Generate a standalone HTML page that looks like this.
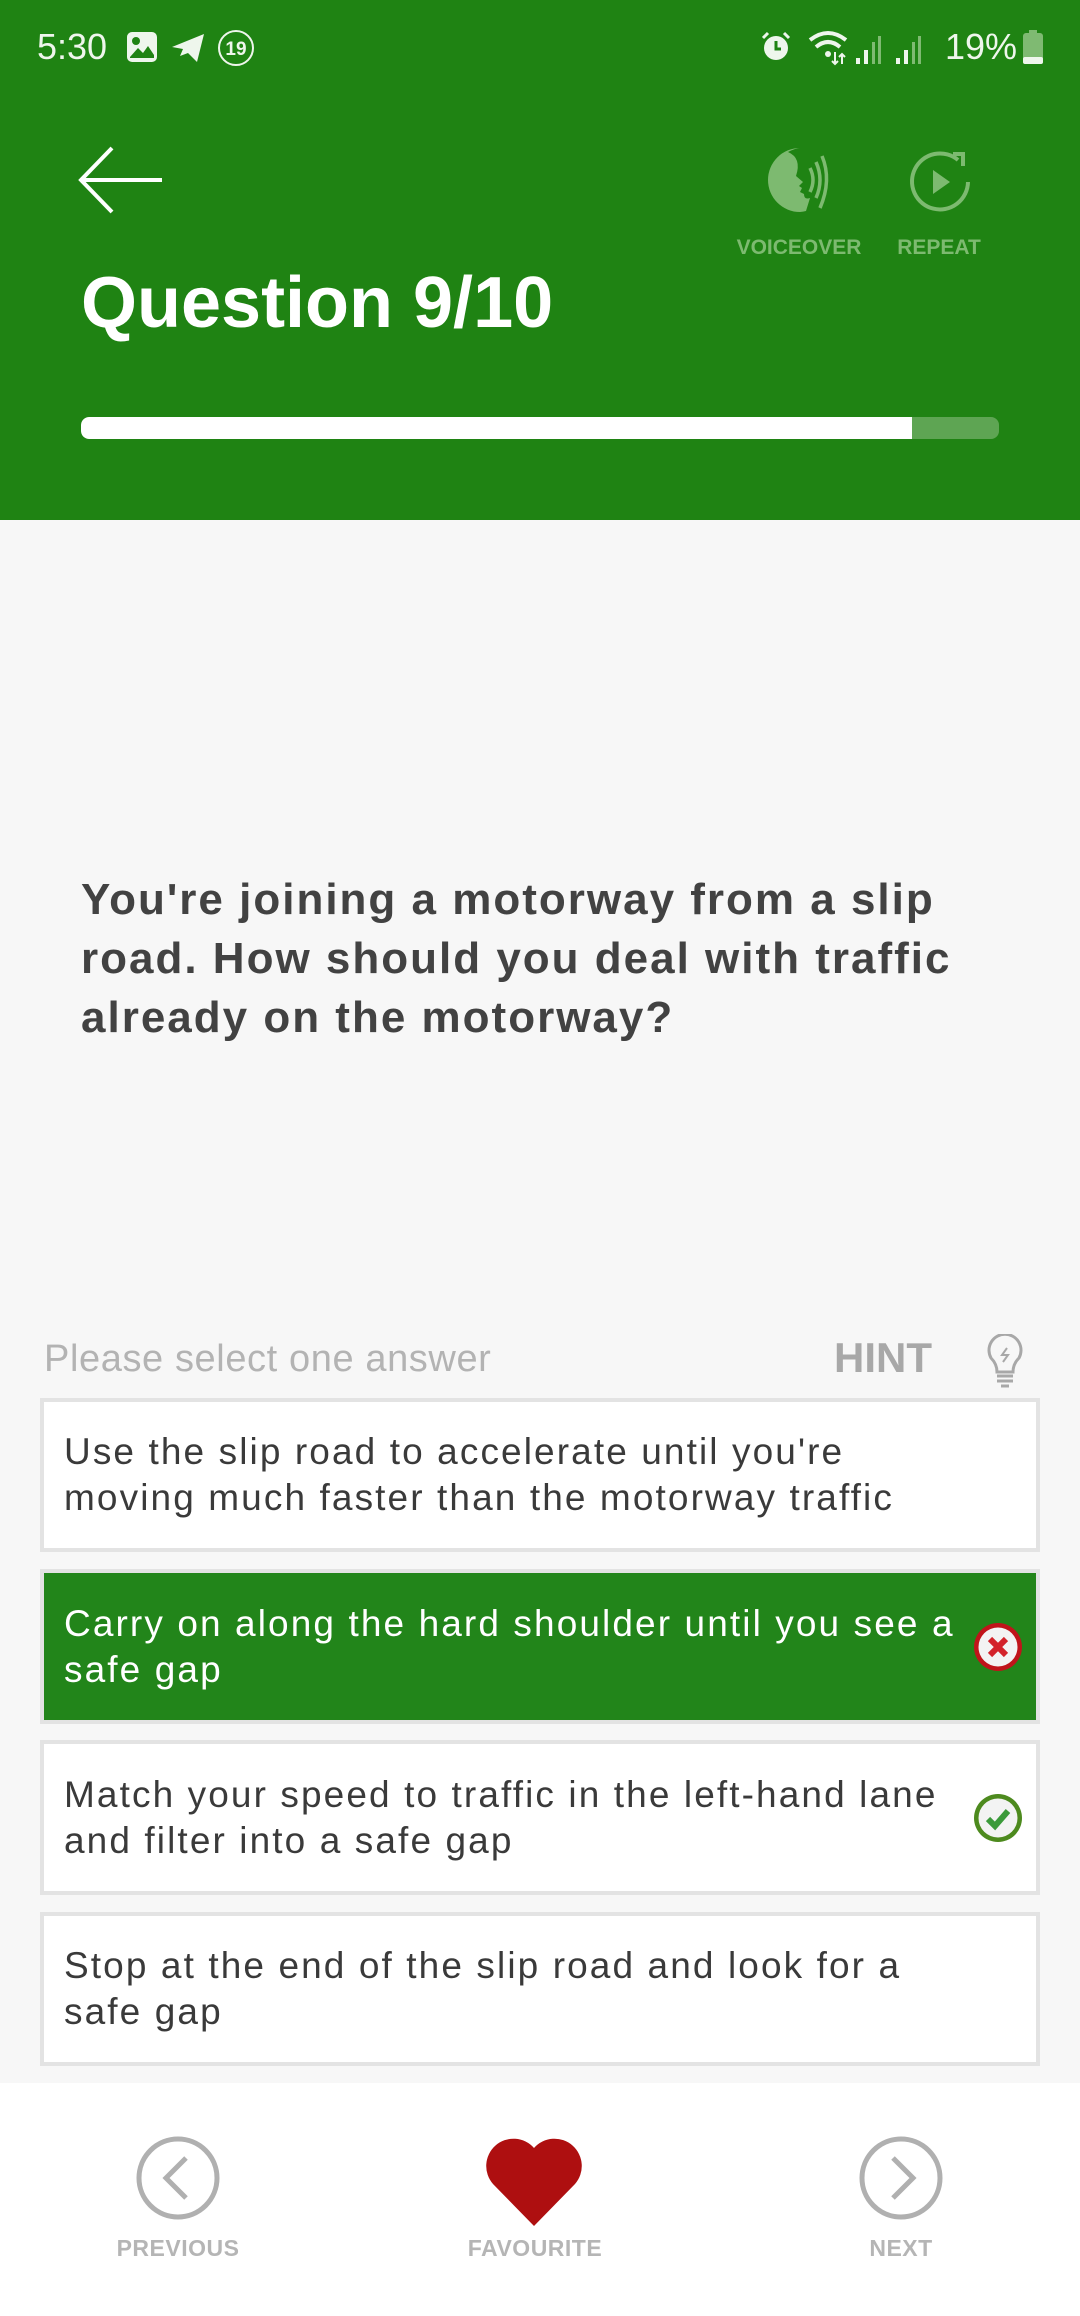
<!DOCTYPE html>
<html><head><meta charset="utf-8">
<style>
*{margin:0;padding:0;box-sizing:border-box}
html,body{width:1080px;height:2316px;overflow:hidden;background:#f7f7f7;font-family:"Liberation Sans",sans-serif}
.hdr{position:absolute;left:0;top:0;width:1080px;height:520px;background:#1f8313}
.abs{position:absolute}
.status{color:#eef6ec;font-size:36px;top:26px}
.title{left:81px;top:262px;color:#fff;font-weight:bold;font-size:72px;letter-spacing:0px}
.lbl{color:#7dba70;font-size:21px;font-weight:bold;top:236px;width:140px;text-align:center}
.bar{left:81px;top:417px;width:918px;height:22px;border-radius:8px;background:#5ea553;overflow:hidden}
.bar div{width:831px;height:100%;background:#fff;border-radius:8px 0 0 8px}
.q{left:81px;top:870px;width:1000px;color:#424242;font-weight:bold;font-size:44px;line-height:59px;letter-spacing:2px;white-space:nowrap}
.sel{left:44px;top:1338px;color:#b3b3b3;font-size:38px;letter-spacing:0.6px}
.hint{left:834px;top:1334px;color:#a8a8a8;font-size:42px;font-weight:bold}
.ans{position:absolute;left:40px;width:1000px;background:#fff;border:4px solid #e3e3e3;color:#3a3a3a;font-size:37px;line-height:46px;letter-spacing:2.1px;padding:0 0 0 20px;display:flex;align-items:center;white-space:nowrap}
.ans.g{background:#22851a;color:#fff}
.ico{position:absolute;right:12px;top:50%;margin-top:-26px;width:52px;height:52px}
.bot{left:0;top:2083px;width:1080px;height:233px;background:#fff}
.bl{color:#b5b5b5;font-size:23px;font-weight:bold;top:2235px;width:200px;text-align:center;letter-spacing:0.5px}
</style></head><body>
<div class="hdr"></div>
<div class="abs status" style="left:37px">5:30</div>
<svg class="abs" style="left:126px;top:31px" width="32" height="32" viewBox="0 0 32 32"><rect x="1" y="1" width="30" height="30" rx="5" fill="#eef6ec"/><circle cx="10" cy="10" r="4" fill="#1f8313"/><path d="M4 26 L12 17 L17 22 L22 15 L28 24 L28 27 L4 27Z" fill="#1f8313"/></svg>
<svg class="abs" style="left:170px;top:32px" width="36" height="32" viewBox="0 0 36 32"><path d="M2 15 L34 2 L27 30 L18 21 L10 24 L13 17Z" fill="#eef6ec"/></svg>
<svg class="abs" style="left:216px;top:28px" width="40" height="40" viewBox="0 0 40 40"><circle cx="20" cy="20" r="17" fill="none" stroke="#eef6ec" stroke-width="2"/><text x="20" y="27" font-size="19" font-weight="bold" fill="#eef6ec" text-anchor="middle" font-family="Liberation Sans">19</text></svg>
<svg class="abs" style="left:760px;top:30px" width="32" height="34" viewBox="0 0 32 34"><circle cx="16" cy="18" r="12" fill="#eef6ec"/><path d="M16 11v8h5" stroke="#1f8313" stroke-width="3" fill="none"/><path d="M3 8 L8 3 M29 8 L24 3" stroke="#eef6ec" stroke-width="3"/></svg>
<svg class="abs" style="left:808px;top:28px" width="120" height="40" viewBox="0 0 120 40"><path d="M2 12 Q20 -2 38 12" stroke="#eef6ec" stroke-width="4" fill="none"/><path d="M8 19 Q20 9 32 19" stroke="#eef6ec" stroke-width="4" fill="none"/><circle cx="20" cy="26" r="3" fill="#eef6ec"/><path d="M27 24v12M24 33l3 3 3-3M34 36V26M31 29l3-3 3 3" stroke="#eef6ec" stroke-width="2" fill="none"/><rect x="48" y="30" width="4" height="6" fill="#eef6ec"/><rect x="56" y="22" width="4" height="14" fill="#eef6ec"/><rect x="64" y="14" width="3" height="22" fill="#7fba72"/><rect x="70" y="8" width="3" height="28" fill="#7fba72"/><rect x="88" y="30" width="4" height="6" fill="#eef6ec"/><rect x="96" y="22" width="4" height="14" fill="#eef6ec"/><rect x="104" y="14" width="3" height="22" fill="#7fba72"/><rect x="110" y="8" width="3" height="28" fill="#7fba72"/></svg>
<div class="abs status" style="left:945px">19%</div>
<svg class="abs" style="left:1022px;top:30px" width="22" height="34" viewBox="0 0 22 34"><rect x="7" y="0" width="8" height="4" fill="#7fba72"/><rect x="1" y="3" width="20" height="31" rx="3" fill="#7fba72"/><rect x="1" y="27" width="20" height="7" rx="2" fill="#eef6ec"/></svg>

<svg class="abs" style="left:78px;top:146px" width="86" height="68" viewBox="0 0 86 68"><path d="M84 34H4M34 2L3 34L34 66" stroke="#fff" stroke-width="4" fill="none"/></svg>
<svg class="abs" style="left:766px;top:146px" width="68" height="68" viewBox="0 0 68 68"><path d="M34 2A32 32 0 0 0 34 66A32 32 0 0 0 40 65 L44 52 Q38 54 38 48 L34 46 L36 42 L33 40 L37 36 L30 30 Q36 12 22 6 Q30 2 34 2Z" fill="#7dba70"/><path d="M44 22Q50 34 44 46M50 16Q58 34 50 52M56 10Q66 34 54 62" stroke="#7dba70" stroke-width="3.5" fill="none"/></svg>
<svg class="abs" style="left:906px;top:148px" width="68" height="68" viewBox="0 0 68 68"><path d="M52 12A28 28 0 1 0 62 34" stroke="#7dba70" stroke-width="4" fill="none"/><path d="M47 6H57V18" stroke="#7dba70" stroke-width="4" fill="none"/><path d="M27 22L44 34L27 46Z" fill="#7dba70"/></svg>
<div class="abs lbl" style="left:729px">VOICEOVER</div>
<div class="abs lbl" style="left:869px">REPEAT</div>
<div class="abs title">Question 9/10</div>
<div class="abs bar"><div></div></div>

<div class="abs q">You're joining a motorway from a slip<br>road. How should you deal with traffic<br>already on the motorway?</div>

<div class="abs sel">Please select one answer</div>
<div class="abs hint">HINT</div>
<svg class="abs" style="left:985px;top:1334px" width="40" height="56" viewBox="0 0 40 56"><path d="M12 38Q12 30 6 24A16 16 0 1 1 34 24Q28 30 28 38Z" fill="none" stroke="#a8a8a8" stroke-width="3"/><path d="M12 42H28M12 47H28M16 52H24" stroke="#a8a8a8" stroke-width="3"/><path d="M22 14L17 21H23L18 28" stroke="#a8a8a8" stroke-width="2" fill="none"/></svg>

<div class="ans" style="top:1398px;height:154px">Use the slip road to accelerate until you're<br>moving much faster than the motorway traffic</div>
<div class="ans g" style="top:1569px;height:155px">Carry on along the hard shoulder until you see a<br>safe gap
<svg class="ico" viewBox="0 0 52 52"><circle cx="26" cy="26" r="24" fill="#c0141a"/><circle cx="26" cy="26" r="19.5" fill="#f3f3f3"/><path d="M18 18L34 34M34 18L18 34" stroke="#d3222a" stroke-width="6"/></svg></div>
<div class="ans" style="top:1740px;height:155px">Match your speed to traffic in the left-hand lane<br>and filter into a safe gap
<svg class="ico" viewBox="0 0 52 52"><circle cx="26" cy="26" r="24" fill="#4d8a1e"/><circle cx="26" cy="26" r="19.5" fill="#f3f3f3"/><path d="M16 27L23 34L36 19" stroke="#3b9a3a" stroke-width="6" fill="none"/></svg></div>
<div class="ans" style="top:1912px;height:154px">Stop at the end of the slip road and look for a<br>safe gap</div>

<div class="abs bot"></div>
<svg class="abs" style="left:136px;top:2136px" width="84" height="84" viewBox="0 0 84 84"><circle cx="42" cy="42" r="39" fill="none" stroke="#b0b0b0" stroke-width="5"/><path d="M50 22L30 42L50 62" stroke="#b0b0b0" stroke-width="5" fill="none"/></svg>
<svg class="abs" style="left:485px;top:2136px" width="98" height="92" viewBox="0 0 98 92"><path d="M49 90L8 48A24 24 0 0 1 49 12A24 24 0 0 1 90 48Z" fill="#ae0f10"/></svg>
<svg class="abs" style="left:859px;top:2136px" width="84" height="84" viewBox="0 0 84 84"><circle cx="42" cy="42" r="39" fill="none" stroke="#b0b0b0" stroke-width="5"/><path d="M34 22L54 42L34 62" stroke="#b0b0b0" stroke-width="5" fill="none"/></svg>
<div class="abs bl" style="left:78px">PREVIOUS</div>
<div class="abs bl" style="left:435px">FAVOURITE</div>
<div class="abs bl" style="left:801px">NEXT</div>
</body></html>
